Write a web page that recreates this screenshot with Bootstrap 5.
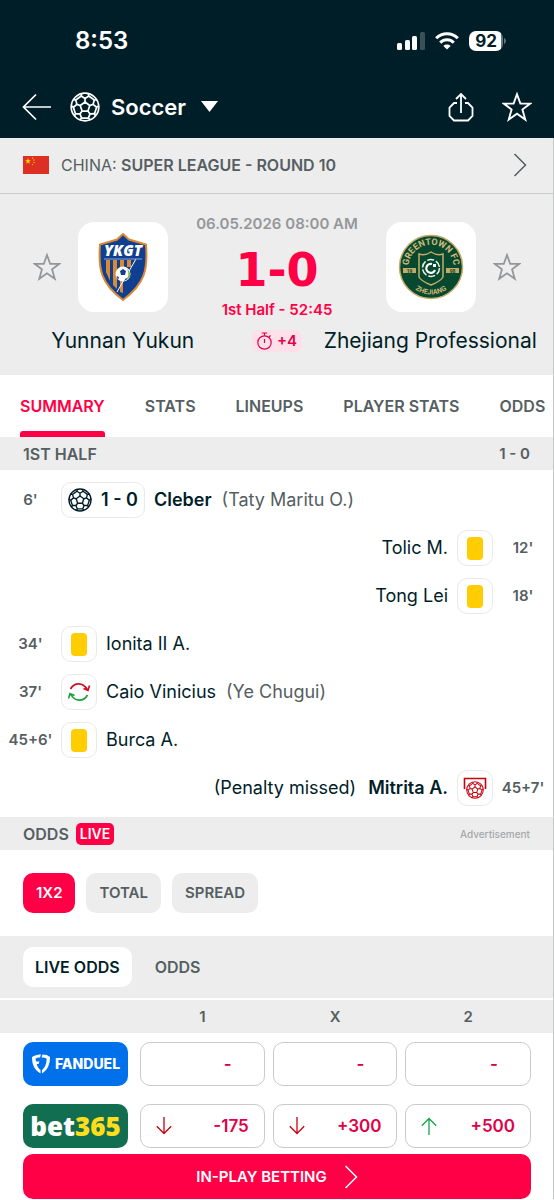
<!DOCTYPE html>
<html lang="en">
<head>
<meta charset="utf-8">
<meta name="viewport" content="width=device-width, initial-scale=1">
<title>Yunnan Yukun - Zhejiang Professional</title>
<link rel="stylesheet" href="https://cdn.jsdelivr.net/npm/bootstrap@5.3.0/dist/css/bootstrap.min.css">
<style>
  :root { --ink:#001e28; --live:#ff0046; --score:#e00047; --muted:#555e61; --band:#ededed; }
  body { font-family:Inter,"Liberation Sans",sans-serif; font-size:18px; line-height:24px; color:var(--ink); background:#fff; }
  a { text-decoration:none; color:inherit; }
  svg { display:block; flex-shrink:0; }
  .icon-btn { background:none; border:0; padding:0; color:inherit; }
  .topbar { background:var(--ink); color:#fff; }
  .status { height:82px; padding:0 47px 0 75px; }
  .signals { gap:10px; }
  .clock { font-size:24px; font-weight:600; }
  .battery { width:34px; height:20px; border-radius:7px; background:linear-gradient(90deg,#fff 32px,#66787e 32px); color:var(--ink); font-size:17px; line-height:20px; font-weight:700; text-align:center; }
  .mainnav { height:56px; padding:0 22px 7px; }
  .picker { margin-left:19px; gap:11px; }
  .sport { font-size:22px; font-weight:600; }
  .page-edge { border-right:1px solid #c4c6c7; }
  .band { background:var(--band); }
  .league { height:56px; padding:0 26px 2px 23px; font-size:16px; color:var(--muted); border-bottom:1px solid #c8cacb; }
  .match { padding:22px 0 20px; height:181px; }
  .teams { padding:6px 32px 0 33px; gap:17px; }
  .crest { width:90px; height:90px; border-radius:16px; background:#fff; }
  .fav { color:#949799; }
  .middle { margin:-10px -40px; flex:1; }
  .date { font-size:15px; font-weight:600; color:#949799; line-height:24px; }
  .score { font-family:"DejaVu Sans",sans-serif; font-weight:700; font-size:46px; line-height:60px; height:62px; color:var(--live); padding-top:4px; }
  .stage { font-size:15px; font-weight:600; color:var(--live); }
  .names { display:grid; grid-template-columns:1fr 50px 1fr; gap:6px; font-size:21px; line-height:26px; margin-top:16px; text-align:center; white-space:nowrap; }
  .added { background:#fde0ea; border-radius:6px; color:var(--score); font-size:15px; font-weight:600; height:22px; }
  .tabs { height:62px; gap:40px; padding-left:20px; overflow:hidden; white-space:nowrap; font-size:16px; font-weight:600; color:var(--muted); }
  .tabs a { height:62px; line-height:62px; }
  .tabs a.active { color:var(--live); }
  .tabs a.active::after { content:""; display:block; height:6px; margin-top:-6px; border-radius:3px 3px 0 0; background:var(--live); }
  .sect { height:33px; padding:0 23px; font-size:16px; font-weight:600; color:var(--muted); }
  .tally { font-size:15px; }
  .events { padding:6px 0 5px; margin:0; list-style:none; }
  .events li { height:48px; display:flex; align-items:center; white-space:nowrap; }
  .minute { width:61px; text-align:center; font-size:15px; font-weight:600; color:var(--muted); }
  .flex-row-reverse .minute { width:60px; }
  .tile { min-width:36px; height:36px; border:1px solid #e9e9eb; border-radius:10px; display:flex; align-items:center; justify-content:center; }
  .goal { padding:0 6px; gap:9px; }
  .who { margin:0 10px 0 9px; }
  .flex-row-reverse .who { margin:0 9px 0 12px; }
  .assist { color:var(--muted); }
  .yellow { width:16px; height:23px; border-radius:4px; background:#ffcd00; }
  .live { background:var(--live); color:#fff; border-radius:5px; font-size:14px; line-height:22px; padding:0 4px; margin-left:7px; }
  .advert { font-size:10px; font-weight:500; color:#a5a8aa; }
  .chips { padding:23px; gap:11px; }
  .chip { height:40px; border:0; border-radius:10px; padding:0 13px; font-size:15px; font-weight:600; color:var(--muted); background:var(--band); }
  .chip.on { background:var(--live); color:#fff; }
  .switch { padding:11px 23px; height:62px; margin-bottom:2px; gap:11px; }
  .switch .chip { font-size:16px; padding:0 12px; }
  .switch .lit { background:#fff; color:var(--ink); }
  .odds { width:100%; table-layout:fixed; }
  .odds th { height:33px; text-align:center; font-size:15px; font-weight:600; color:var(--muted); background:var(--band); padding:0 4px; }
  .odds td { padding:9px 4px; height:62px; }
  .odds .bookie { width:136px; padding:0 8px 0 23px; }
  .odds th:last-child, .odds td:last-child { padding-right:22px; }
  .odds .leg { width:24%; }
  .brand { height:44px; border-radius:10px; display:flex; align-items:center; justify-content:center; color:#fff; }
  .fanduel { background:#0070eb; font-size:14px; font-weight:800; gap:4px; }
  .bet { background:#126e51; font-family:"Open Sans",sans-serif; font-weight:800; font-size:26px; }
  .bet span { color:#ffdf1b; }
  .price { width:100%; height:44px; border:1px solid #c8cacb; border-radius:10px; background:#fff; color:var(--score); font-size:17px; font-weight:600; display:flex; align-items:center; justify-content:space-between; padding:0 15px; }
  .price.none { justify-content:flex-end; padding-right:32px; }
  .cta { margin:-3px 22px 1px 23px; height:45px; border-radius:10px; background:var(--live); color:#fff; font-size:15px; font-weight:600; gap:17px; }
</style>
</head>
<body>
<svg width="0" height="0" class="position-absolute" aria-hidden="true">
  <defs>
    <g id="seam"><path d="M15 10V6.500M11.800 1.400L11.200 4L15 6.500L18.800 4L18.200 1.400M18.800 4L24.300 8"/></g>
    <symbol id="ball" viewBox="0 0 30 30">
      <g fill="none" stroke="currentColor" stroke-width="1.700" stroke-linejoin="round">
        <circle cx="15" cy="15" r="13.800"/>
        <path d="M15 10L19.760 13.460L17.940 19.050H12.060L10.240 13.460Z"/>
        <use href="#seam"/><use href="#seam" transform="rotate(72 15 15)"/><use href="#seam" transform="rotate(144 15 15)"/><use href="#seam" transform="rotate(216 15 15)"/><use href="#seam" transform="rotate(288 15 15)"/>
      </g>
    </symbol>
    <symbol id="star" viewBox="0 0 30 30"><path d="M15 2.200L18.400 11.600H28.200L20.400 17.500L23.300 27.600L15 21.700L6.700 27.600L9.600 17.500L1.800 11.600H11.600Z" fill="none" stroke="currentColor" stroke-width="1.900"/></symbol>
    <symbol id="fstar" viewBox="0 0 10 10"><path d="M5 0L6.200 3.600H10L6.900 5.900L8.100 9.600L5 7.300L1.900 9.600L3.100 5.900L0 3.600H3.800Z"/></symbol>
    <symbol id="next" viewBox="0 0 14 24"><path d="M1.500 1L12.500 12L1.500 23" fill="none" stroke="currentColor" stroke-width="1.500"/></symbol>
    <symbol id="down" viewBox="0 0 16 18"><path d="M8 0V16.500M.800 9.300L8 16.500L15.200 9.300" fill="none" stroke="currentColor" stroke-width="1.300"/></symbol>
  </defs>
</svg>

<header class="topbar">
  <div class="status d-flex align-items-center justify-content-between">
    <span class="clock">8:53</span>
    <div class="signals d-flex align-items-center">
      <svg width="29" height="18" viewBox="0 0 29 18" fill="#fff"><rect x="1" y="11" width="5" height="7" rx="1.500"/><rect x="9" y="8" width="5" height="10" rx="1.500"/><rect x="16" y="4" width="5" height="14" rx="1.500"/><rect x="24" y="0" width="5" height="18" rx="1.500" fill="#3a5059"/></svg>
      <svg width="24" height="18" viewBox="0 0 24 18" fill="none" stroke="#fff" stroke-width="3"><path d="M1.200 6.300C7.200 .100 16.800 .100 22.800 6.300"/><path d="M5.200 10.600C9 6.700 15 6.700 18.800 10.600"/><path d="M12 17.600L8.400 13.900C10.400 12.100 13.600 12.100 15.600 13.900Z" fill="#fff" stroke="none"/></svg>
      <div class="d-flex align-items-center"><div class="battery">92</div><svg width="4" height="8" viewBox="0 0 4 8"><path d="M1 1C3.500 2 3.500 6 1 7Z" fill="#66787e"/></svg></div>
    </div>
  </div>
  <nav class="mainnav d-flex align-items-center">
    <a href="#" aria-label="Back"><svg width="29" height="28" viewBox="0 0 29 28" fill="none" stroke="#fff" stroke-width="1.700"><path d="M29 14H1.500M14 1.500L1.500 14L14 26.500"/></svg></a>
    <button type="button" class="icon-btn picker d-flex align-items-center">
      <svg width="30" height="30"><use href="#ball"/></svg>
      <span class="sport">Soccer</span>
      <svg class="ms-1" width="17" height="12" viewBox="0 0 17 12"><path d="M0 0H17L8.500 11Z" fill="#fff"/></svg>
    </button>
    <button type="button" class="icon-btn ms-auto" aria-label="Share"><svg width="26" height="30" viewBox="0 0 26 30" fill="none" stroke="#fff" stroke-width="1.800"><path d="M9 11H6L1.500 15.500V24L6 28.500H20L24.500 24V15.500L20 11H17M13 21V2M8 7L13 2L18 7"/></svg></button>
    <button type="button" class="icon-btn ms-4 ps-1" aria-label="Favourite"><svg width="30" height="32" viewBox="0 0 30 30"><use href="#star"/></svg></button>
  </nav>
</header>

<main class="page-edge">
  <a href="#" class="league band d-flex align-items-center">
    <svg width="26" height="18" viewBox="0 0 26 18"><path d="M0 0H26V18H0Z" fill="#de2f25"/><g fill="#ffde00"><use href="#fstar" x="2" y="2" width="6" height="6"/><use href="#fstar" x="8.500" y="1" width="2" height="2"/><use href="#fstar" x="10" y="3" width="2" height="2"/><use href="#fstar" x="10" y="5.500" width="2" height="2"/><use href="#fstar" x="8.500" y="7.500" width="2" height="2"/></g></svg>
    <span class="ms-2 ps-1">CHINA: <span class="fw-semibold">SUPER LEAGUE - ROUND 10</span></span>
    <svg class="ms-auto" width="14" height="24"><use href="#next"/></svg>
  </a>

  <section class="match band">
    <div class="teams d-flex align-items-center">
      <button type="button" class="icon-btn fav" aria-label="Follow Yunnan Yukun"><svg width="28" height="30"><use href="#star"/></svg></button>
      <div class="crest d-flex align-items-center justify-content-center">
        <svg width="50" height="68" viewBox="0 0 50 68">
          <path d="M25 1L31 6.500L48 11.500C50 36 47 51 25 67C3 51 0 36 2 11.500L19 6.500Z" fill="#103f91" stroke="#d98a35" stroke-width="2"/>
          <path d="M8 27H12V48L8 39ZM15 27H19V56L15 52ZM22 27H26V38H22ZM29 27H33V34H29ZM22 48H25V60L22 59Z" fill="#d98a35"/>
          <path d="M38 26L19 59" stroke="#fff"/>
          <path d="M6 26H44" stroke="#8fa6d0"/>
          <text x="25" y="23" text-anchor="middle" font-family="Open Sans, sans-serif" font-size="15" font-weight="800" font-style="italic" fill="#fff">YKGT</text>
          <circle cx="25" cy="41" r="7.500" fill="#fff"/><path d="M22 38L25 36L28 38L27 42H23ZM18.500 43L21 44L20 47ZM26 48L28 45L30 46" fill="#103f91"/><path d="M29 36C34 40 33 45 28 47C31 43 31 40 29 36Z" fill="#75b843"/>
        </svg>
      </div>
      <div class="middle text-center text-nowrap">
        <div class="date">06.05.2026 08:00 AM</div>
        <div class="score">1-0</div>
        <div class="stage">1st Half - 52:45</div>
      </div>
      <div class="crest d-flex align-items-center justify-content-center">
        <svg width="66" height="66" viewBox="0 0 66 66">
          <circle cx="33" cy="33" r="31.500" fill="#07492f" stroke="#c3aa69" stroke-width="1.500"/>
          <path id="arcTop" d="M11 38A22.500 22.500 0 1 1 55 38" fill="none"/>
          <path id="arcBottom" d="M5.500 33A27.500 27.500 0 0 0 60.500 33" fill="none"/>
          <g fill="#d0b878" font-family="Roboto, sans-serif" font-weight="700" text-anchor="middle">
            <text font-size="9"><textPath href="#arcTop" startOffset="50%">GREENTOWN FC</textPath></text>
            <text font-size="7"><textPath href="#arcBottom" startOffset="50%">ZHEJIANG</textPath></text>
          </g>
          <path d="M5 34H18V39H5ZM48 34H61V39H48Z" fill="#c3aa69"/>
          <text x="11.500" y="38.500" font-size="5" font-family="Roboto, sans-serif" font-weight="700" text-anchor="middle" fill="#07492f">19</text><text x="54.500" y="38.500" font-size="5" font-family="Roboto, sans-serif" font-weight="700" text-anchor="middle" fill="#07492f">98</text>
          <path d="M21 20Q27 22 33 18Q39 22 45 20V43Q43 47 33 51Q23 47 21 43Z" fill="#07492f" stroke="#c3aa69" stroke-width="1.500"/>
          <circle cx="33" cy="34" r="8.500" fill="none" stroke="#e6f2ea" stroke-width="1.500" stroke-dasharray="7 2"/>
          <path d="M34 30A4.500 4.500 0 1 0 37 36" fill="none" stroke="#fff" stroke-width="2.200"/><path d="M35 30H38V33H35Z" fill="#fff"/>
        </svg>
      </div>
      <button type="button" class="icon-btn fav" aria-label="Follow Zhejiang Professional"><svg width="28" height="30"><use href="#star"/></svg></button>
    </div>
    <div class="names align-items-center">
      <span>Yunnan Yukun</span>
      <span class="added d-flex align-items-center justify-content-center gap-1"><svg width="17" height="18" viewBox="0 0 17 18" fill="none" stroke="currentColor" stroke-width="1.200"><circle cx="8.500" cy="10.500" r="6.700"/><path d="M8.500 3.800V1M5.800 1H11.200M8.500 7V11M13 5L14.500 3.500"/></svg>+4</span>
      <span>Zhejiang Professional</span>
    </div>
  </section>

  <nav class="tabs d-flex">
    <a href="#" class="active">SUMMARY</a><a href="#">STATS</a><a href="#">LINEUPS</a><a href="#">PLAYER STATS</a><a href="#">ODDS</a>
  </nav>

  <div class="sect band d-flex align-items-center justify-content-between"><span>1ST HALF</span><span class="tally">1 - 0</span></div>
  <ul class="events">
    <li><span class="minute">6'</span><span class="tile goal fw-semibold"><svg width="24" height="24"><use href="#ball"/></svg>1 - 0</span><span class="who fw-semibold">Cleber</span><span class="assist">(Taty Maritu O.)</span></li>
    <li class="flex-row-reverse"><span class="minute">12'</span><span class="tile"><i class="yellow"></i></span><span class="who">Tolic M.</span></li>
    <li class="flex-row-reverse"><span class="minute">18'</span><span class="tile"><i class="yellow"></i></span><span class="who">Tong Lei</span></li>
    <li><span class="minute">34'</span><span class="tile"><i class="yellow"></i></span><span class="who">Ionita II A.</span></li>
    <li><span class="minute">37'</span><span class="tile"><svg width="24" height="20" viewBox="0 0 24 20" fill="none" stroke-width="1.600"><path d="M3.500 7C7 .500 16 -.500 20.500 8M16.500 6.500L21 8.500L22.500 3.500" stroke="#d20a1e"/><path d="M20.500 13C17 19.500 8 20.500 3.500 12M7.500 13.500L3 11.500L1.500 16.500" stroke="#18a33a"/></svg></span><span class="who">Caio Vinicius</span><span class="assist">(Ye Chugui)</span></li>
    <li><span class="minute">45+6'</span><span class="tile"><i class="yellow"></i></span><span class="who">Burca A.</span></li>
    <li class="flex-row-reverse"><span class="minute">45+7'</span><span class="tile"><svg width="24" height="22" viewBox="0 0 24 22" color="#c8000f"><path d="M1.500 12V1.500H22.500V12" fill="none" stroke="currentColor" stroke-width="1.600"/><use href="#ball" x="3" y="4" width="18" height="18"/></svg></span><span class="who fw-semibold">Mitrita A.</span><span>(Penalty missed)</span></li>
  </ul>

  <div class="sect band d-flex align-items-center"><span>ODDS</span><span class="live">LIVE</span><span class="advert ms-auto">Advertisement</span></div>
  <div class="chips d-flex">
    <button type="button" class="chip on">1X2</button><button type="button" class="chip">TOTAL</button><button type="button" class="chip">SPREAD</button>
  </div>
  <div class="switch band d-flex">
    <button type="button" class="chip lit">LIVE ODDS</button><button type="button" class="chip">ODDS</button>
  </div>
  <table class="odds">
    <thead><tr><th class="bookie" aria-label="Bookmaker"></th><th class="leg">1</th><th class="leg">X</th><th>2</th></tr></thead>
    <tbody>
      <tr>
        <td class="bookie"><a href="#" class="brand fanduel"><svg width="20" height="20" viewBox="0 0 20 20"><path d="M1 3C4 .800 8 .500 10 .500L9 3.500C7 3.500 5.500 4 4.500 4.500L5 7.500H8.500L7.500 10H5.700C6.300 12.500 7.500 14.500 9.500 16V19.500C3.500 16 1 11 1 3ZM11.500 .500C14.500 .500 17 1.300 19 3C19 10.500 16.500 16 11 19.500V16C14 13.500 15.500 10 15.700 4.700C14 3.700 12.500 3.500 10.500 3.500Z" fill="#fff"/></svg>FANDUEL</a></td>
        <td><button type="button" class="price none">-</button></td><td><button type="button" class="price none">-</button></td><td><button type="button" class="price none">-</button></td>
      </tr>
      <tr>
        <td class="bookie"><a href="#" class="brand bet">bet<span>365</span></a></td>
        <td><button type="button" class="price"><svg width="16" height="18" color="#c8000f"><use href="#down"/></svg>-175</button></td>
        <td><button type="button" class="price"><svg width="16" height="18" color="#c8000f"><use href="#down"/></svg>+300</button></td>
        <td><button type="button" class="price"><svg width="16" height="18" viewBox="0 0 16 18" color="#18a34a"><use href="#down" transform="rotate(180 8 9)"/></svg>+500</button></td>
      </tr>
    </tbody>
  </table>
  <a href="#" class="cta d-flex align-items-center justify-content-center">IN-PLAY BETTING <svg width="14" height="24"><use href="#next"/></svg></a>
</main>
<script src="https://cdn.jsdelivr.net/npm/bootstrap@5.3.0/dist/js/bootstrap.bundle.min.js"></script>
</body>
</html>
